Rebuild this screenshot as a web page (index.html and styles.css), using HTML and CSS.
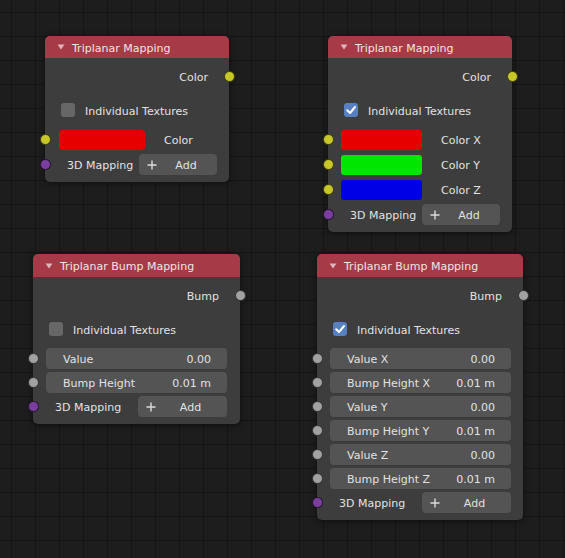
FILE: index.html
```html
<!DOCTYPE html>
<html>
<head>
<meta charset="utf-8">
<link rel="stylesheet" href="styles.css">
</head>
<body>
<div class="canvas">

  <div class="node n1">
    <div class="hdr"><svg class="tri" width="8" height="6" viewBox="0 0 8 6"><path d="M0.5 0.5 H7.5 L4 5.5 Z"/></svg><span class="t">Triplanar Mapping</span></div>
    <div class="body">
      <div class="row out"><span class="t">Color</span><i class="sock s-out yellow"></i></div>
      <div class="row chk"><span class="box"></span><span class="t">Individual Textures</span></div>
      <div class="inputs gap-c">
        <div class="row in"><i class="sock s-in yellow"></i><span class="swatch red w86"></span><span class="slbl t">Color</span></div>
        <div class="row in"><i class="sock s-in purple"></i><span class="mlbl t">3D Mapping</span><span class="addbtn w78"><svg class="plus" width="10" height="10" viewBox="0 0 10 10"><path d="M5 0.5 V9.5 M0.5 5 H9.5"/></svg><span class="t">Add</span></span></div>
      </div>
    </div>
  </div>

  <div class="node n2">
    <div class="hdr"><svg class="tri" width="8" height="6" viewBox="0 0 8 6"><path d="M0.5 0.5 H7.5 L4 5.5 Z"/></svg><span class="t">Triplanar Mapping</span></div>
    <div class="body">
      <div class="row out"><span class="t">Color</span><i class="sock s-out yellow"></i></div>
      <div class="row chk"><span class="box on"><svg width="14" height="14" viewBox="0 0 14 14"><path d="M3.2 7.2 L6 10 L11 4"/></svg></span><span class="t">Individual Textures</span></div>
      <div class="inputs gap-c">
        <div class="row in"><i class="sock s-in yellow"></i><span class="swatch red w81"></span><span class="slbl t">Color X</span></div>
        <div class="row in"><i class="sock s-in yellow"></i><span class="swatch green w81"></span><span class="slbl t">Color Y</span></div>
        <div class="row in"><i class="sock s-in yellow"></i><span class="swatch blue w81"></span><span class="slbl t">Color Z</span></div>
        <div class="row in"><i class="sock s-in purple"></i><span class="mlbl t">3D Mapping</span><span class="addbtn w78"><svg class="plus" width="10" height="10" viewBox="0 0 10 10"><path d="M5 0.5 V9.5 M0.5 5 H9.5"/></svg><span class="t">Add</span></span></div>
      </div>
    </div>
  </div>

  <div class="node n3">
    <div class="hdr"><svg class="tri" width="8" height="6" viewBox="0 0 8 6"><path d="M0.5 0.5 H7.5 L4 5.5 Z"/></svg><span class="t">Triplanar Bump Mapping</span></div>
    <div class="body">
      <div class="row out"><span class="t">Bump</span><i class="sock s-out grey"></i></div>
      <div class="row chk"><span class="box"></span><span class="t">Individual Textures</span></div>
      <div class="inputs gap-v">
        <div class="row in"><i class="sock s-in grey"></i><span class="field"><span class="t">Value</span><span class="t">0.00</span></span></div>
        <div class="row in"><i class="sock s-in grey"></i><span class="field"><span class="t">Bump Height</span><span class="t">0.01 m</span></span></div>
        <div class="row in"><i class="sock s-in purple"></i><span class="mlbl t">3D Mapping</span><span class="addbtn w89"><svg class="plus" width="10" height="10" viewBox="0 0 10 10"><path d="M5 0.5 V9.5 M0.5 5 H9.5"/></svg><span class="t">Add</span></span></div>
      </div>
    </div>
  </div>

  <div class="node n4">
    <div class="hdr"><svg class="tri" width="8" height="6" viewBox="0 0 8 6"><path d="M0.5 0.5 H7.5 L4 5.5 Z"/></svg><span class="t">Triplanar Bump Mapping</span></div>
    <div class="body">
      <div class="row out"><span class="t">Bump</span><i class="sock s-out grey"></i></div>
      <div class="row chk"><span class="box on"><svg width="14" height="14" viewBox="0 0 14 14"><path d="M3.2 7.2 L6 10 L11 4"/></svg></span><span class="t">Individual Textures</span></div>
      <div class="inputs gap-v">
        <div class="row in"><i class="sock s-in grey"></i><span class="field"><span class="t">Value X</span><span class="t">0.00</span></span></div>
        <div class="row in"><i class="sock s-in grey"></i><span class="field"><span class="t">Bump Height X</span><span class="t">0.01 m</span></span></div>
        <div class="row in"><i class="sock s-in grey"></i><span class="field"><span class="t">Value Y</span><span class="t">0.00</span></span></div>
        <div class="row in"><i class="sock s-in grey"></i><span class="field"><span class="t">Bump Height Y</span><span class="t">0.01 m</span></span></div>
        <div class="row in"><i class="sock s-in grey"></i><span class="field"><span class="t">Value Z</span><span class="t">0.00</span></span></div>
        <div class="row in"><i class="sock s-in grey"></i><span class="field"><span class="t">Bump Height Z</span><span class="t">0.01 m</span></span></div>
        <div class="row in"><i class="sock s-in purple"></i><span class="mlbl t">3D Mapping</span><span class="addbtn w89"><svg class="plus" width="10" height="10" viewBox="0 0 10 10"><path d="M5 0.5 V9.5 M0.5 5 H9.5"/></svg><span class="t">Add</span></span></div>
      </div>
    </div>
  </div>

</div>
</body>
</html>
```

FILE: styles.css
```css
html, body {
  margin: 0;
  padding: 0;
  background: #1d1d1d;
}

.canvas {
  position: relative;
  width: 565px;
  height: 558px;
  overflow: hidden;
  background-color: #1d1d1d;
  background-image:
    linear-gradient(to right, #151515 1px, transparent 1px),
    linear-gradient(to bottom, #151515 1px, transparent 1px);
  background-size: 24px 24px;
  background-position: 11px 12px;
  font-family: "DejaVu Sans", "Liberation Sans", sans-serif;
  font-size: 11px;
  color: #e2e2e2;
}

.t {
  padding-top: 2px;
  line-height: 13px;
}

.node {
  position: absolute;
  background: #3d3d3d;
  border-radius: 5px;
  box-shadow: 0 1px 6px rgba(0, 0, 0, 0.55);
}

.n1 { left: 45px; top: 36px; width: 184px; }
.n2 { left: 328px; top: 36px; width: 184px; }
.n3 { left: 33px; top: 254px; width: 207px; }
.n4 { left: 317px; top: 254px; width: 206px; }

.hdr {
  height: 22px;
  background: #a63a47;
  border-radius: 5px 5px 0 0;
  display: flex;
  align-items: center;
  padding-left: 12px;
  color: #f0e4e4;
}

.n3 .hdr, .n4 .hdr { height: 23px; }

.tri {
  fill: #e0b4b9;
  margin-right: 7px;
  flex: none;
}

.body {
  display: flex;
  flex-direction: column;
  padding: 8px 0 7px 0;
}

.row {
  position: relative;
  display: flex;
  align-items: center;
  height: 20px;
}

.out {
  justify-content: flex-end;
  padding-right: 21px;
}

.chk {
  margin-top: 14px;
  padding-left: 16px;
}

.box {
  width: 14px;
  height: 14px;
  border-radius: 3px;
  background: #676767;
  margin-right: 10px;
  flex: none;
  display: flex;
}

.box.on {
  background: #5680c2;
}

.box svg path {
  fill: none;
  stroke: #ffffff;
  stroke-width: 2;
  stroke-linecap: round;
  stroke-linejoin: round;
}

.inputs {
  margin-top: 9px;
  display: flex;
  flex-direction: column;
}

.gap-c { gap: 4px; }
.gap-v { gap: 3px; }

.in {
  height: 21px;
  padding-left: 13px;
  padding-right: 12px;
}

.n3 .in { padding-right: 13px; }

.sock {
  position: absolute;
  top: 50%;
  width: 9px;
  height: 9px;
  margin-top: -5.5px;
  border-radius: 50%;
  border: 1px solid rgba(0, 0, 0, 0.65);
}

.s-in { left: -5.5px; }
.s-out { right: -5.5px; }

.yellow { background: #c7c729; }
.grey { background: #a1a1a1; }
.purple { background: #7a3f9e; }

.swatch {
  height: 20px;
  border-radius: 3px;
  flex: none;
}

.n1 .swatch { margin-left: 1px; }

.w86 { width: 86px; }
.w81 { width: 81px; }

.red { background: #e60000; }
.green { background: #00e600; }
.blue { background: #0000e6; }

.slbl {
  margin-left: 19px;
}

.mlbl {
  padding-left: 9px;
}

.addbtn {
  margin-left: auto;
  height: 21px;
  border-radius: 4px;
  background: #545454;
  display: flex;
  align-items: center;
  flex: none;
}

.w78 { width: 78px; }
.w89 { width: 89px; }

.plus {
  margin-left: 8px;
  flex: none;
}

.plus path {
  stroke: #dcdcdc;
  stroke-width: 1.4;
  fill: none;
}

.addbtn .t {
  flex: 1;
  text-align: center;
  padding-right: 2px;
}

.field {
  flex: 1;
  height: 21px;
  border-radius: 4px;
  background: #545454;
  display: flex;
  align-items: center;
  justify-content: space-between;
  padding: 0 16px 0 17px;
}
```
